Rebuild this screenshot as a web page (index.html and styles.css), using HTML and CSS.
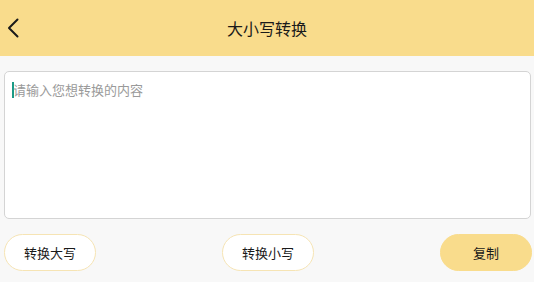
FILE: index.html
```html
<!DOCTYPE html>
<html lang="zh-CN">
<head>
<meta charset="utf-8">
<title>大小写转换</title>
<link rel="stylesheet" href="styles.css">
</head>
<body>
<header class="topbar">
  <span class="back" aria-label="返回">
    <svg width="12" height="20" viewBox="0 0 12 20"><path d="M10.5 1.5 L2 10 L10.5 18.5" fill="none" stroke="#1a1a1a" stroke-width="2" stroke-linecap="round" stroke-linejoin="round"/></svg>
  </span>
  <h1 class="title">大小写转换</h1>
</header>
<main class="content">
  <div class="input-box">
    <span class="caret"></span><span class="placeholder">请输入您想转换的内容</span>
  </div>
  <div class="actions">
    <button class="btn btn-outline">转换大写</button>
    <button class="btn btn-outline">转换小写</button>
    <button class="btn btn-fill">复制</button>
  </div>
</main>
</body>
</html>
```
FILE: styles.css
```css
html, body {
  margin: 0;
  padding: 0;
  background: #f8f8f8;
  font-family: "Noto Sans CJK SC", "Noto Sans", sans-serif;
  color: #1a1a1a;
}
.topbar {
  height: 56px;
  background: #f9dc8c;
  display: flex;
  align-items: center;
  justify-content: center;
  position: relative;
}
.back {
  position: absolute;
  left: 7px;
  top: 18px;
  width: 12px;
  height: 20px;
  display: flex;
}
.title {
  margin: 0;
  font-size: 16px;
  font-weight: 400;
  letter-spacing: 0;
  color: #1a1a1a;
}
.content {
  padding: 15px 3px 0 4px;
}
.input-box {
  box-sizing: border-box;
  height: 148px;
  background: #fff;
  border: 1px solid #d4d4d4;
  border-radius: 5px;
  padding: 8px 7px;
  display: flex;
  align-items: flex-start;
}
.caret {
  width: 2px;
  height: 16px;
  background: #1a9a86;
  margin-top: 2px;
  margin-right: -1px;
}
.placeholder {
  font-size: 13px;
  line-height: 20px;
  color: #9a9a9a;
}
.actions {
  margin-top: 15px;
  display: flex;
  justify-content: space-between;
  margin-right: -1px;
}
.btn {
  width: 92px;
  height: 37px;
  border-radius: 19px;
  font-family: inherit;
  font-size: 13px;
  color: #1a1a1a;
  cursor: pointer;
  padding: 0;
}
.btn-outline {
  background: #fff;
  border: 1px solid #f6e4b4;
}
.btn-fill {
  background: #f9dc8c;
  border: 1px solid #f9dc8c;
}
```
